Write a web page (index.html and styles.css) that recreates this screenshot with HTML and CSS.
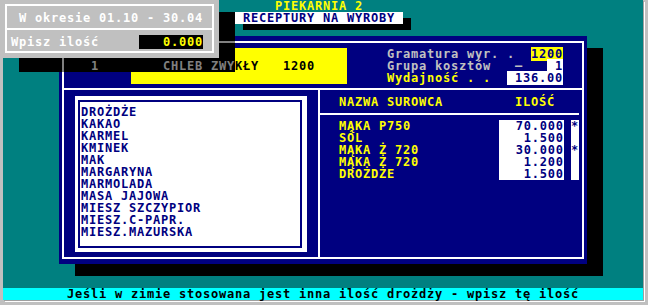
FILE: index.html
```html
<!DOCTYPE html>
<html lang="pl">
<head>
<meta charset="utf-8">
<title>PIEKARNIA 2</title>
<link rel="stylesheet" href="styles.css">
</head>
<body>
<div class="screen">
  <div class="title">PIEKARNIA 2</div>
  <div class="desk"></div>
  <div class="status">Jeśli w zimie stosowana jest inna ilość drożdży - wpisz tę ilość</div>

  <div class="tab-shadow"></div>
  <div class="tab">RECEPTURY NA WYROBY</div>

  <div class="panel">
    <div class="frame">
      <div class="top">
        <div class="product">    CHLEB ZWYKŁY   1200</div>
        <div class="info">
          <div class="line"><span class="gray">Gramatura wyr. .  </span><span class="fld-y">1200</span></div>
          <div class="line"><span class="gray">Grupa kosztów   –   </span><span class="fld-w"> 1</span></div>
          <div class="line"><span class="yel">Wydajność . .  </span><span class="fld-w"> 136.00</span></div>
        </div>
      </div>
      <div class="bottom">
        <div class="left">
          <div class="listbox">
            <div class="listframe">
              <ul class="list">
                <li>DROŻDŻE</li>
                <li>KAKAO</li>
                <li>KARMEL</li>
                <li>KMINEK</li>
                <li>MAK</li>
                <li>MARGARYNA</li>
                <li>MARMOLADA</li>
                <li>MASA JAJOWA</li>
                <li>MIESZ SZCZYPIOR</li>
                <li>MIESZ.C-PAPR.</li>
                <li>MIESZ.MAZURSKA</li>
              </ul>
            </div>
          </div>
        </div>
        <div class="right">
          <div class="head">NAZWA SUROWCA         ILOŚĆ</div>
          <div class="rule"></div>
          <div class="rows">
            <div class="name">MĄKA P750</div><div class="val">70.000</div><div class="gap"></div><div class="star">*</div>
            <div class="name">SÓL</div><div class="val">1.500</div><div class="gap"></div><div class="star"></div>
            <div class="name">MĄKA Ż 720</div><div class="val">30.000</div><div class="gap"></div><div class="star">*</div>
            <div class="name">MĄKA Ż 720</div><div class="val">1.200</div><div class="gap"></div><div class="star"></div>
            <div class="name">DROŻDŻE</div><div class="val">1.500</div><div class="gap"></div><div class="star"></div>
          </div>
        </div>
      </div>
    </div>
  </div>

  <div class="pop-shadow"><div class="sh-v"></div><div class="sh-h"></div><div class="sh-text">         1        CHLEB ZWY</div></div>
  <div class="popup">
    <div class="pframe">
      <div class="prow1">W okresie 01.10 - 30.04</div>
      <div class="pdiv"></div>
      <div class="prow2">Wpisz ilość     <span class="pfield">   0.000</span></div>
    </div>
  </div>
</div>
</body>
</html>
```

FILE: styles.css
```css
* {
  box-sizing: border-box;
  margin: 0;
  padding: 0;
}

html,
body {
  width: 648px;
  height: 305px;
  overflow: hidden;
}

body {
  background: #c0c0c0;
  font-family: "DejaVu Sans Mono", monospace;
  font-weight: bold;
  font-size: 12px;
  letter-spacing: 0.7754px;
  line-height: 12px;
}

.screen {
  position: relative;
  margin-left: 3px;
  width: 640px;
  height: 300px;
  background: #008080;
  display: flex;
  flex-direction: column;
  box-shadow: 1px 1px 0 #a0a0a0, 2px 2px 0 #ffffff;
}

.title {
  height: 12px;
  padding-left: 272px;
  color: #ffff00;
  white-space: pre;
}

.desk {
  flex: 1;
}

.status {
  height: 12px;
  padding-left: 64px;
  background: #00ffff;
  color: #000000;
  white-space: pre;
}

/* tab title */
.tab-shadow {
  position: absolute;
  left: 240px;
  top: 18px;
  width: 168px;
  height: 12px;
  background: #000000;
}

.tab {
  position: absolute;
  left: 232px;
  top: 12px;
  width: 168px;
  height: 12px;
  padding-left: 8px;
  background: #ffffff;
  color: #000080;
  white-space: pre;
}

/* main panel */
.panel {
  position: absolute;
  left: 56px;
  top: 36px;
  width: 528px;
  height: 228px;
  padding: 5px 3px;
  background: #000080;
  box-shadow: 16px 12px 0 #000000;
}

.frame {
  height: 100%;
  border: 2px solid #ffffff;
  display: flex;
  flex-direction: column;
}

.top {
  height: 47px;
  padding-top: 5px;
  border-bottom: 2px solid #ffffff;
  display: flex;
}

.product {
  margin-left: 67px;
  width: 216px;
  height: 36px;
  padding-top: 12px;
  background: #ffff00;
  color: #000000;
  white-space: pre;
}

.info {
  margin-left: 40px;
}

.line {
  height: 12px;
  white-space: pre;
}

.gray {
  color: #c0c0c0;
}

.yel {
  color: #ffff00;
}

.fld-y {
  background: #ffff00;
  color: #000080;
}

.fld-w {
  background: #ffffff;
  color: #000080;
}

.bottom {
  flex: 1;
  display: flex;
}

.left {
  width: 256px;
  border-right: 2px solid #ffffff;
  padding: 6px 0 0 11px;
}

.listbox {
  width: 232px;
  height: 156px;
  padding: 4px 5px 4px 3px;
  background: #ffffff;
}

.listframe {
  height: 100%;
  border: 2px solid #000080;
  padding: 4px 0 0 1px;
}

.list {
  list-style: none;
  color: #000080;
}

.list li {
  height: 12px;
  white-space: pre;
}

.right {
  flex: 1;
  padding-top: 6px;
}

.head {
  height: 12px;
  padding-left: 19px;
  color: #ffff00;
  white-space: pre;
}

.rule {
  height: 2px;
  margin: 5px 3px 0 0;
  background: #ffffff;
}

.rows {
  margin-top: 5px;
  padding-left: 19px;
  display: grid;
  grid-template-columns: 160px 64px 8px 8px;
  grid-auto-rows: 12px;
}

.name {
  color: #ffff00;
  white-space: pre;
}

.val {
  background: #ffffff;
  color: #000080;
  text-align: right;
  margin-right: -0.7754px;
}

.star {
  background: #ffffff;
  color: #000080;
}

/* popup with shadow */
.pop-shadow {
  position: absolute;
  left: 16px;
  top: 12px;
  width: 216px;
  height: 60px;
  padding-top: 48px;
  background: #000000;
  color: #808080;
}

.sh-text {
  white-space: pre;
}

.sh-v {
  position: absolute;
  left: 43px;
  top: 46px;
  width: 2px;
  height: 14px;
  background: #808080;
}

.sh-h {
  position: absolute;
  left: 200px;
  top: 29px;
  width: 16px;
  height: 2px;
  background: #808080;
}

.popup {
  position: absolute;
  left: -3px;
  top: 0;
  width: 219px;
  height: 58px;
  padding: 4px 5px 5px 5px;
  background: #c0c0c0;
}

.pframe {
  height: 100%;
  border: 2px solid #ffffff;
  color: #ffffff;
}

.prow1 {
  height: 18px;
  padding: 6px 0 0 12px;
  white-space: pre;
}

.pdiv {
  height: 2px;
  margin-top: 4px;
  background: #ffffff;
}

.prow2 {
  height: 12px;
  margin-top: 6px;
  padding-left: 4px;
  white-space: pre;
}

.pfield {
  background: #000000;
  color: #ffff00;
}
```
